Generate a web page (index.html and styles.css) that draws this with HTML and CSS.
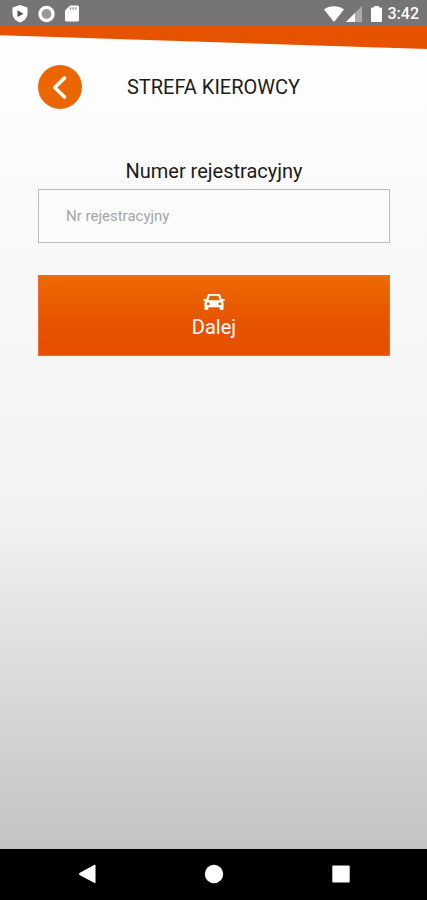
FILE: index.html
```html
<!DOCTYPE html>
<html lang="pl">
<head>
<meta charset="utf-8">
<meta name="viewport" content="width=device-width, initial-scale=1">
<title>Strefa kierowcy</title>
<link rel="stylesheet" href="styles.css">
</head>
<body>
<div class="status">
  <div class="status-group status-left">
    <svg width="16" height="18" viewBox="0 0 16 18" aria-hidden="true"><path fill="#fff" d="M8 0 15.500 2.500V8C15.500 12.500 12.500 16 8 17.500 3.500 16 .5 12.500.5 8V2.500z"/><path fill="#555" d="M5.500 5.200 11.500 8.700 5.500 12z"/></svg>
    <svg width="17" height="18" viewBox="0 0 17 18" aria-hidden="true"><circle cx="8.500" cy="9" r="8.200" fill="#fff"/><circle cx="8.500" cy="9" r="4.900" fill="#999"/></svg>
    <svg width="14" height="17" viewBox="0 0 14 17" aria-hidden="true"><path fill="#fff" d="M5 .5h7.500q1.500 0 1.500 1.500v13q0 1.500-1.500 1.500H1.500Q0 16.500 0 15V5.500z"/><path stroke="#999" stroke-width="1.400" d="M5.500 2.300v2.400M8.200 2.300v2.400M11 2.300v2.400"/></svg>
  </div>
  <div class="status-group status-right">
    <svg width="20" height="16" viewBox="0 0 20 16" aria-hidden="true"><path fill="#fff" d="M0 3.500C5.500-.8 14.500-.8 20 3.500L10 16z"/></svg>
    <svg class="signal" width="16" height="16" viewBox="0 0 16 16" aria-hidden="true"><path fill="#aaa" d="M16 0v16H0z"/><path fill="#fff" d="M9 7v9H0z"/></svg>
    <svg class="battery" width="11" height="16" viewBox="0 0 11 16" aria-hidden="true"><path fill="#fff" d="M3 0h5v1.500h2q1 0 1 1V15q0 1-1 1H1q-1 0-1-1V2.500q0-1 1-1h2z"/></svg>
    <span class="clock">3:42</span>
  </div>
</div>
<main class="screen">
  <div class="band"></div>
  <header class="header">
    <button class="back" type="button" aria-label="Wstecz">
      <svg width="43" height="43" viewBox="0 0 43 43" aria-hidden="true"><path d="M25.500 12 15.800 21.500 25.500 31" fill="none" stroke="#fff" stroke-width="3.600" stroke-linecap="round" stroke-linejoin="round"/></svg>
    </button>
    <h1 class="title">STREFA KIEROWCY</h1>
  </header>
  <form class="form">
    <label class="label" for="plate">Numer rejestracyjny</label>
    <input class="field" id="plate" type="text" placeholder="Nr rejestracyjny">
    <button class="submit" type="button">
      <svg width="22" height="18" viewBox="0 0 22 18" aria-hidden="true"><path fill="#fff" fill-rule="evenodd" d="M6.500 1h9q1.500 0 2 1.400L18.700 6H21q1 0 1 .8T21 7.800h-1.300q.8.800.8 2V16q0 1-1 1h-1.800q-1 0-1-1v-1.700H5.300V16q0 1-1 1H2.500q-1 0-1-1V9.800q0-1.200.8-2H1Q0 7.800 0 6.900T1 6h2.300l1.200-3.600Q5 1 6.500 1zM6.700 2.800 5.400 7.200h11.200l-1.300-4.400zM5.200 9.300a1.500 1.500 0 1 0 0 3 1.500 1.500 0 1 0 0-3zM16.800 9.300a1.500 1.500 0 1 0 0 3 1.500 1.500 0 1 0 0-3z"/></svg>
      <span>Dalej</span>
    </button>
  </form>
</main>
<nav class="navbar" aria-label="System">
  <button class="nav-button" type="button" aria-label="Wstecz"><svg width="20" height="20" viewBox="0 0 20 20" aria-hidden="true"><path fill="#fff" d="M18.500 1.500v17Q18.500 19.500 17.500 19L2.500 11Q1.500 10 2.500 9L17.500 .8Q18.500 .5 18.500 1.500z"/></svg></button>
  <button class="nav-button" type="button" aria-label="Ekran główny"><svg width="20" height="20" viewBox="0 0 20 20" aria-hidden="true"><circle cx="10" cy="10" r="9.200" fill="#fff"/></svg></button>
  <button class="nav-button" type="button" aria-label="Ostatnie"><svg width="20" height="20" viewBox="0 0 20 20" aria-hidden="true"><rect x="1.300" y="1.500" width="17.400" height="17" rx="1" fill="#fff"/></svg></button>
</nav>
</body>
</html>
```
FILE: styles.css
```css
* {
  box-sizing: border-box;
}

body {
  margin: 0;
  min-height: 100vh;
  display: flex;
  flex-direction: column;
  font-family: Roboto, "Liberation Sans", sans-serif;
  color: #1c1c1c;
}

button {
  border: 0;
  padding: 0;
  font: inherit;
  cursor: pointer;
}

svg {
  display: block;
}

.status {
  display: flex;
  justify-content: space-between;
  align-items: center;
  padding: 1px 8px 0 12px;
  background: #757575;
}

.status-group {
  display: flex;
  align-items: center;
}

.status-left {
  gap: 10px;
}

.signal {
  margin-left: 2px;
}

.battery {
  margin: 0 6px 0 9px;
}

.clock {
  color: #fff;
  font-size: 16px;
  font-weight: 500;
  line-height: 25px;
}

.screen {
  flex: 1;
  background: linear-gradient(#ffffff 0%, #fafafa 20%, #f2f2f2 60%, #dadada 80%, #c3c3c3 100%);
}

.band {
  height: 23px;
  background: #e65300;
  clip-path: polygon(0 0, 100% 0, 100% 100%, 0 40%);
}

.header {
  display: grid;
  grid-template-columns: 44px 1fr 44px;
  align-items: center;
  padding: 16px 38px 0;
}

.back {
  width: 44px;
  height: 44px;
  display: grid;
  place-items: center;
  border-radius: 50%;
  background: #eb6600;
}

.title {
  margin: 0;
  font-size: 20px;
  font-weight: 400;
  line-height: 24px;
  text-align: center;
}

.form {
  display: flex;
  flex-direction: column;
  padding: 50px 37px 0 38px;
}

.label {
  font-size: 20px;
  line-height: 24px;
  text-align: center;
  margin-bottom: 6px;
}

.field {
  height: 54px;
  padding: 0 27px;
  border: 1px solid #bdbdbd;
  border-radius: 0;
  background: #fbfbfb;
  font-family: inherit;
  font-size: 15px;
  color: #1c1c1c;
}

.field::placeholder {
  color: #a6a6a6;
  opacity: 1;
}

.submit {
  display: flex;
  flex-direction: column;
  align-items: center;
  gap: 4px;
  margin-top: 32px;
  padding: 17px 0 16px;
  border: 1px solid #ee6a35;
  background: linear-gradient(#ee6a00, #e65300 60%, #e65000);
  color: #fff;
  font-size: 20px;
  line-height: 24px;
}

.navbar {
  display: flex;
  justify-content: center;
  gap: 107px;
  padding: 15px 0 16px;
  background: #000;
}

.nav-button {
  background: none;
}
```
